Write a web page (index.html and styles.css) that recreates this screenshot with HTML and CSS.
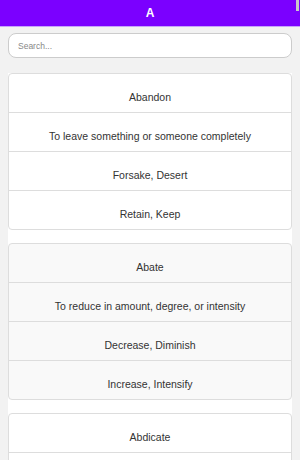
FILE: index.html
```html
<!DOCTYPE html>
<html lang="en">
<head>
    <meta charset="UTF-8">
    <meta name="viewport" content="width=device-width, initial-scale=1.0">
    <title>Words - A</title>
    <link rel="stylesheet" href="styles.css">
</head>
<body>
    <div class="top-bar">
        <h1 class="letter">A</h1>
        <span class="bar-thumb"></span>
    </div>

    <div class="page">
        <input class="search" type="text" placeholder="Search...">

        <div class="word-list">
            <div class="word-card">
                <div class="word-row">Abandon</div>
                <div class="word-row">To leave something or someone completely</div>
                <div class="word-row">Forsake, Desert</div>
                <div class="word-row">Retain, Keep</div>
            </div>

            <div class="word-card">
                <div class="word-row">Abate</div>
                <div class="word-row">To reduce in amount, degree, or intensity</div>
                <div class="word-row">Decrease, Diminish</div>
                <div class="word-row">Increase, Intensify</div>
            </div>

            <div class="word-card">
                <div class="word-row">Abdicate</div>
                <div class="word-row">To give up a throne or responsibility</div>
                <div class="word-row">Resign, Renounce</div>
                <div class="word-row">Claim, Assume</div>
            </div>
        </div>
    </div>
</body>
</html>
```

FILE: styles.css
```css
* {
    margin: 0;
    padding: 0;
    box-sizing: border-box;
    font-family: "Liberation Sans", Arial, sans-serif;
}

html, body {
    height: 100%;
    overflow: hidden;
}

body {
    background: #f2f2f2;
    color: #333;
}

.top-bar {
    position: relative;
    height: 27px;
    background: #7b00ff;
    border-bottom: 1px solid #c6a3fb;
    display: flex;
    align-items: center;
    justify-content: center;
}

.letter {
    color: #fff;
    font-size: 12px;
    font-weight: bold;
}

.bar-thumb {
    position: absolute;
    top: 0;
    right: 1px;
    width: 3px;
    height: 11px;
    background: #c9c9c9;
}

.page {
    padding: 6px 8px 0;
}

.search {
    display: block;
    width: 100%;
    height: 25px;
    padding: 0 9px;
    border: 1px solid #ccc;
    border-radius: 8px;
    background: #fff;
    font-size: 8.5px;
    color: #333;
    outline: none;
}

.search::placeholder {
    color: #888;
}

.word-list {
    margin-top: 15px;
    background: #fff;
}

.word-card {
    border: 1px solid #ddd;
    border-radius: 4px;
    background: #fff;
    margin-bottom: 13px;
    overflow: hidden;
}

.word-card:nth-child(even) {
    background: #f9f9f9;
}

.word-row {
    padding: 16px 8px 8px;
    font-size: 10.5px;
    line-height: 14px;
    text-align: center;
    border-bottom: 1px solid #ddd;
}

.word-row:last-child {
    border-bottom: none;
}
```
